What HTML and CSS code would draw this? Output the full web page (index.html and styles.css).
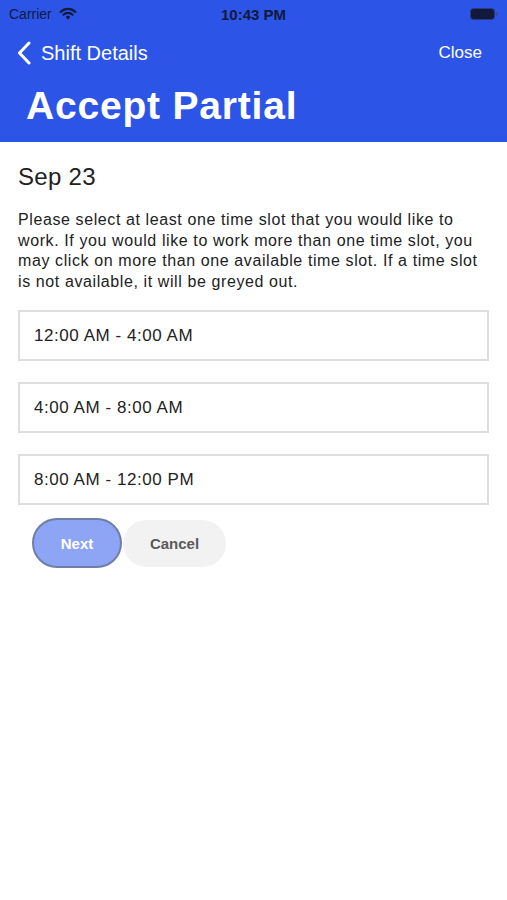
FILE: index.html
```html
<!DOCTYPE html>
<html lang="en">
<head>
<meta charset="utf-8">
<title>Accept Partial</title>
<link rel="stylesheet" href="styles.css">
</head>
<body>
<header class="appbar">
  <div class="statusbar">
    <div class="sb-left">
      <span class="carrier">Carrier</span>
      <svg class="wifi" width="18" height="13" viewBox="0 0 18 13">
        <path d="M9 12.5 L6.6 9.9 A3.4 3.4 0 0 1 11.4 9.9 Z" fill="#111a3a"/>
        <path d="M4.4 7.7 A6.5 6.5 0 0 1 13.6 7.7" stroke="#111a3a" stroke-width="2.2" fill="none" stroke-linecap="round"/>
        <path d="M1.6 4.9 A10.4 10.4 0 0 1 16.4 4.9" stroke="#111a3a" stroke-width="2.2" fill="none" stroke-linecap="round"/>
      </svg>
    </div>
    <span class="clock">10:43 PM</span>
    <div class="sb-right">
      <svg class="battery" width="28" height="12" viewBox="0 0 28 12">
        <rect x="0.5" y="0.5" width="24" height="11" rx="3" fill="#111a3a" stroke="#2a3a80" stroke-width="1"/>
        <rect x="25.5" y="4" width="2" height="4" rx="1" fill="#3a4a90"/>
      </svg>
    </div>
  </div>
  <nav class="navrow">
    <div class="back">
      <svg class="chev" width="14" height="24" viewBox="0 0 14 24">
        <path d="M12 2 L2.5 12 L12 22" stroke="#fff" stroke-width="3" fill="none" stroke-linecap="round" stroke-linejoin="round"/>
      </svg>
      <span>Shift Details</span>
    </div>
    <span class="close">Close</span>
  </nav>
  <h1 class="title">Accept Partial</h1>
</header>
<main class="content">
  <h2 class="date">Sep 23</h2>
  <p class="desc">Please select at least one time slot that you would like to work. If you would like to work more than one time slot, you may click on more than one available time slot. If a time slot is not available, it will be greyed out.</p>
  <div class="slots">
    <div class="slot">12:00 AM - 4:00 AM</div>
    <div class="slot">4:00 AM - 8:00 AM</div>
    <div class="slot">8:00 AM - 12:00 PM</div>
  </div>
  <div class="actions">
    <button class="btn btn-next">Next</button>
    <button class="btn btn-cancel">Cancel</button>
  </div>
</main>
</body>
</html>
```
FILE: styles.css
```css
* { box-sizing: border-box; }
html, body { margin: 0; padding: 0; background: #fff; }
body {
  font-family: "Liberation Sans", Arial, sans-serif;
  color: #222;
  width: 507px;
}
.appbar {
  background: #2c55e8;
  height: 142px;
  color: #fff;
  display: flex;
  flex-direction: column;
}
.statusbar {
  height: 28px;
  display: flex;
  align-items: center;
  justify-content: space-between;
  padding: 0 9px 0 9px;
  position: relative;
}
.sb-left { display: flex; align-items: center; gap: 7px; }
.carrier { font-size: 14px; color: #111a3a; }
.wifi { margin-top: -1px; }
.clock {
  position: absolute;
  left: 0; right: 0;
  text-align: center;
  font-size: 15px;
  font-weight: bold;
  color: #111a3a;
  pointer-events: none;
}
.sb-right { display: flex; align-items: center; padding-right: 0; }
.battery { display: block; }
.navrow {
  height: 46px;
  margin-top: 2px;
  display: flex;
  align-items: center;
  justify-content: space-between;
  padding: 0 25px 0 17px;
}
.back { display: flex; align-items: center; gap: 10px; font-size: 20px; }
.chev { display: block; }
.close { font-size: 17px; }
.title {
  margin: 0;
  padding: 8px 0 0 26px;
  font-size: 39px;
  line-height: 44px;
  font-weight: bold;
  letter-spacing: 0.8px;
}
.content { padding: 0 18px; }
.date {
  margin: 21px 0 0 0;
  font-size: 24px;
  line-height: 28px;
  font-weight: normal;
  letter-spacing: 0.3px;
  color: #222;
}
.desc {
  margin: 19px 0 0 0;
  font-size: 16px;
  line-height: 20.5px;
  letter-spacing: 0.6px;
  color: #222;
}
.slots {
  margin-top: 18px;
  display: flex;
  flex-direction: column;
  gap: 21px;
}
.slot {
  height: 51px;
  border: 2px solid #dedede;
  display: flex;
  align-items: center;
  padding-left: 14px;
  font-size: 17px;
  letter-spacing: 0.55px;
  color: #222;
}
.actions {
  display: flex;
  align-items: center;
  padding-left: 14px;
  margin-top: 13px;
  gap: 1px;
}
.btn {
  font-family: "Liberation Sans", Arial, sans-serif;
  font-size: 15px;
  font-weight: bold;
  border-radius: 25px;
  cursor: pointer;
}
.btn-next {
  width: 90px;
  height: 50px;
  background: #8ea4f4;
  border: 2px solid #6f7ea8;
  color: #fff;
}
.btn-cancel {
  width: 103px;
  height: 47px;
  background: #f2f2f2;
  border: none;
  color: #5a5a5a;
}
```
